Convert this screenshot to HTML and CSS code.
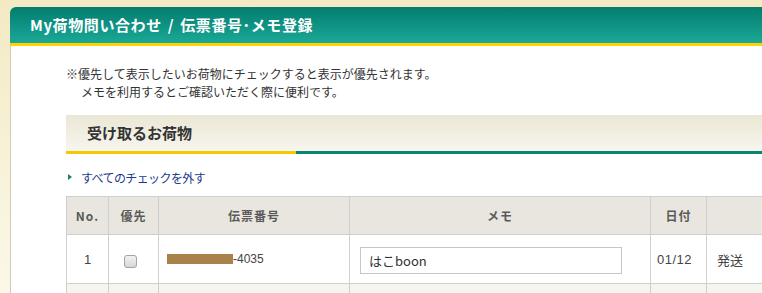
FILE: index.html
```html
<!DOCTYPE html>
<html lang="ja">
<head>
<meta charset="utf-8">
<title>My荷物問い合わせ</title>
<link rel="stylesheet" href="styles.css">
</head>
<body>
<div class="page">
  <div class="panel">
    <div class="panel-head">
      <h1 class="panel-title">My荷物問い合わせ / 伝票番号･メモ登録</h1>
    </div>
    <div class="panel-body">
      <p class="note"><span class="mark">※</span>優先して表示したいお荷物にチェックすると表示が優先されます。<br>メモを利用するとご確認いただく際に便利です。</p>
      <div class="box">
        <h2 class="box-title">受け取るお荷物</h2>
        <div class="box-line"><span class="line-y"></span><span class="line-g"></span></div>
      </div>
      <a class="uncheck" href="#"><span class="arrow"></span>すべてのチェックを外す</a>
      <table class="list">
        <colgroup>
          <col class="c-no"><col class="c-pri"><col class="c-slip"><col class="c-memo"><col class="c-date"><col class="c-st"><col class="c-more">
        </colgroup>
        <thead>
          <tr><th>No.</th><th>優先</th><th>伝票番号</th><th>メモ</th><th>日付</th><th></th><th></th></tr>
        </thead>
        <tbody>
          <tr>
            <td class="center num">1</td>
            <td class="center"><input type="checkbox" class="chk"></td>
            <td class="slip"><span class="redact"></span>-4035</td>
            <td class="memo"><input type="text" class="memo-input" value="はこboon"></td>
            <td class="date">01/12</td>
            <td class="status">発送</td>
            <td></td>
          </tr>
          <tr class="alt"><td></td><td></td><td></td><td></td><td></td><td></td><td></td></tr>
        </tbody>
      </table>
    </div>
  </div>
</div>
</body>
</html>
```

FILE: styles.css
```css
html, body {
  margin: 0;
  padding: 0;
  overflow: hidden;
}
body {
  background: linear-gradient(#f3eac4, #fbf8e8 293px);
  font-family: "Noto Sans CJK JP", "Liberation Sans", sans-serif;
  color: #333;
}
.page {
  width: 762px;
  height: 293px;
  overflow: hidden;
  padding-top: 7px;
  box-sizing: border-box;
}
.panel {
  margin-left: 10px;
  width: 1000px;
  background: #fff;
  border-left: 1px solid #cfcbb8;
  border-top-left-radius: 6px;
  min-height: 300px;
}
.panel-head {
  height: 36px;
  background: linear-gradient(#037c6d, #1aa898);
  border-bottom: 3px solid #ffd200;
  border-top-left-radius: 6px;
  margin-left: -1px;
  display: flex;
  align-items: center;
  padding-left: 20px;
}
.panel-title {
  margin: 0;
  color: #fff;
  font-size: 15px;
  font-weight: bold;
  line-height: 20px;
  letter-spacing: 0.6px;
  word-spacing: 2px;
}
.panel-body {
  padding: 19px 0 0 55px;
}
.note {
  margin: 0;
  font-size: 12px;
  line-height: 18px;
  color: #333;
  padding-left: 15px;
  text-indent: -15px;
}
.box {
  margin-top: 14px;
}
.box-title {
  margin: 0;
  height: 36px;
  line-height: 36px;
  padding-left: 21px;
  font-size: 15px;
  font-weight: bold;
  color: #333;
  background: linear-gradient(#ebe7d5, #f7f6ee);
}
.box-line {
  display: flex;
  height: 3px;
}
.line-y {
  width: 230px;
  background: #f5c800;
}
.line-g {
  flex: 1;
  background: #0a8470;
}
.uncheck {
  display: flex;
  align-items: center;
  margin-top: 14px;
  height: 18px;
  font-size: 12px;
  color: #1b3a8c;
  text-decoration: none;
  letter-spacing: -0.6px;
}
.arrow {
  width: 0;
  height: 0;
  border-left: 4px solid #1f7f6a;
  border-top: 3px solid transparent;
  border-bottom: 3px solid transparent;
  margin: 0 9px 0 2px;
}
.list {
  margin-top: 10px;
  border-collapse: collapse;
  table-layout: fixed;
  width: 900px;
  font-size: 12px;
}
.c-no { width: 42px; }
.c-pri { width: 50px; }
.c-slip { width: 191px; }
.c-memo { width: 301px; }
.c-date { width: 56px; }
.c-st { width: 90px; }
.c-more { width: 170px; }
.list th, .list td {
  border: 1px solid #cfcfcf;
  padding: 0;
}
.list th {
  height: 37px;
  background: #e8e6de;
  color: #5a5a5a;
  font-weight: bold;
  letter-spacing: 1px;
  text-align: center;
}
.list td {
  height: 48px;
  color: #444;
}
.list .alt td {
  background: #f5f5ef;
  height: 20px;
}
.center { text-align: center; }
.num {
  font-family: "Liberation Sans", sans-serif;
  font-size: 13px;
}
.chk {
  appearance: none;
  -webkit-appearance: none;
  width: 13px;
  height: 13px;
  margin: 0 6px 0 0;
  border: 1px solid #a3a3a3;
  border-radius: 3px;
  background: linear-gradient(#f2f2f2, #d6d6d6);
  vertical-align: middle;
}
.slip {
  padding-left: 8px !important;
  font-family: "Liberation Sans", sans-serif;
}
.redact {
  display: inline-block;
  width: 66px;
  height: 10px;
  background: #a8824a;
  vertical-align: -1px;
}
.memo {
  padding-left: 10px !important;
}
.memo-input {
  box-sizing: border-box;
  width: 262px;
  height: 27px;
  border: 1px solid #c6c6c6;
  padding: 0 8px;
  font-size: 13px;
  font-family: "Noto Sans CJK JP", "Liberation Sans", sans-serif;
  color: #333;
  margin-top: 2px;
  outline: none;
}
.date {
  font-family: "Liberation Sans", sans-serif;
  font-size: 13px;
  letter-spacing: 0.5px;
  padding-left: 6px !important;
}
.status {
  padding-left: 10px !important;
  font-size: 13px;
}
```
